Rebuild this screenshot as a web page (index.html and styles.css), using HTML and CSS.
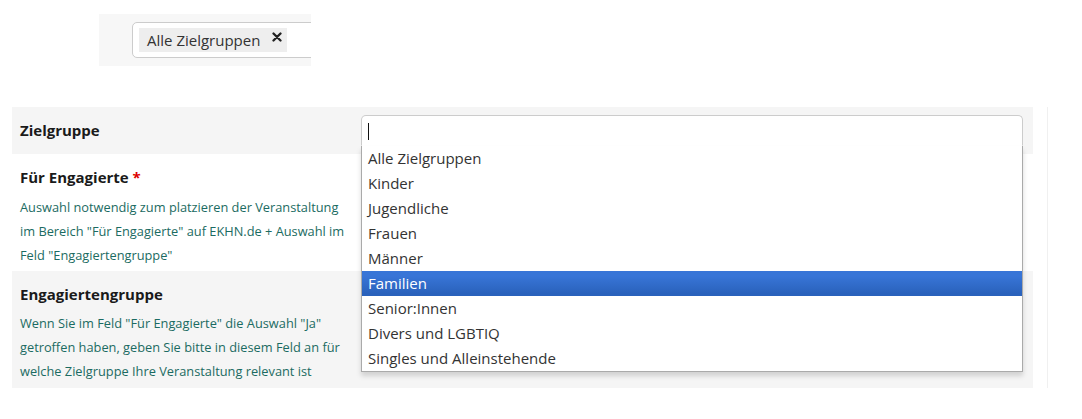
FILE: index.html
```html
<!DOCTYPE html>
<html lang="de">
<head>
<meta charset="utf-8">
<link rel="stylesheet" href="styles.css">
</head>
<body>
<div class="preview">
  <div class="chip-input">
    <span class="chip">Alle Zielgruppen<svg class="chip-x" viewBox="0 0 10 10" width="10" height="10"><path d="M1.5 1.5 L8.5 8.5 M8.5 1.5 L1.5 8.5" stroke="#222" stroke-width="2.3" stroke-linecap="round"/></svg></span>
  </div>
</div>

<div class="form-wrap">
  <div class="form">
    <div class="row grey">
      <div class="label-cell"><div class="label">Zielgruppe</div></div>
      <div class="field-cell">
        <div class="combo">
          <div class="search open"><span class="caret"></span></div>
          <ul class="drop">
            <li>Alle Zielgruppen</li>
            <li>Kinder</li>
            <li>Jugendliche</li>
            <li>Frauen</li>
            <li>Männer</li>
            <li class="hl">Familien</li>
            <li>Senior:Innen</li>
            <li>Divers und LGBTIQ</li>
            <li>Singles und Alleinstehende</li>
          </ul>
        </div>
      </div>
    </div>
    <div class="row">
      <div class="label-cell">
        <div class="label">Für Engagierte <span class="req">*</span></div>
        <div class="help">Auswahl notwendig zum platzieren der Veranstaltung im Bereich "Für Engagierte" auf EKHN.de + Auswahl im Feld "Engagiertengruppe"</div>
      </div>
      <div class="field-cell"><div class="select s2"></div></div>
    </div>
    <div class="row grey">
      <div class="label-cell">
        <div class="label">Engagiertengruppe</div>
        <div class="help">Wenn Sie im Feld "Für Engagierte" die Auswahl "Ja" getroffen haben, geben Sie bitte in diesem Feld an für welche Zielgruppe Ihre Veranstaltung relevant ist</div>
      </div>
      <div class="field-cell"><div class="select s3"></div></div>
    </div>
  </div>
</div>
</body>
</html>
```
FILE: styles.css
```css
* { box-sizing: border-box; }
body {
  margin: 0;
  background: #fff;
  font-family: "Open Sans", "Noto Sans", sans-serif;
  color: #222;
}
.preview {
  margin: 14px 0 0 99px;
  width: 212px;
  height: 52px;
  background: #f7f7f7;
  overflow: hidden;
  padding: 8px 0 0 33px;
}
.chip-input {
  width: 260px;
  height: 36px;
  background: #fff;
  border: 1px solid #ccc;
  border-radius: 5px;
  padding: 5px 0 0 6px;
}
.chip {
  display: inline-flex;
  align-items: flex-start;
  height: 24px;
  padding: 0 5px 0 8px;
  background: #eee;
  font-size: 15px;
  line-height: 24px;
  color: #333;
}
.chip-x { margin: 4px 0 0 12px; }

.form-wrap {
  margin-top: 41px;
  width: 1048px;
  border-right: 1px solid #f0f0f0;
  padding: 0 14px 0 12px;
}
.form { width: 1021px; }
.row {
  display: grid;
  grid-template-columns: 349px 1fr;
  padding-right: 10px;
}
.row.grey { background: #f5f5f5; }
.row:nth-child(1) { height: 47px; }
.row:nth-child(2), .row:nth-child(3) { height: 117px; }
.label-cell { padding: 13px 16px 0 8px; }
.label {
  font-weight: 700;
  font-size: 15px;
  line-height: 20px;
  color: #1a1a1a;
}
.req { color: #d00; }
.help {
  margin-top: 8px;
  font-size: 12.8px;
  line-height: 24px;
  color: #1b6b62;
}
.row:nth-child(3) .help { margin-top: 7px; }
.field-cell { position: relative; }
.combo { position: relative; padding-top: 8px; }
.search {
  height: 31px;
  background: #fff;
  border: 1px solid #ccc;
  border-radius: 5px;
  padding: 7px 0 0 6px;
}
.search.open { border-radius: 5px 5px 0 0; border-bottom-color: #fff; }
.caret {
  display: block;
  width: 1px;
  height: 17px;
  background: #111;
}
.drop {
  position: absolute;
  z-index: 5;
  left: 0;
  right: 0;
  top: 39px;
  margin: 0;
  padding: 0;
  list-style: none;
  background: #fff;
  border: 1px solid #aaa;
  border-top: 0;
  box-shadow: 0 4px 5px rgba(0,0,0,.15);
}
.drop li {
  height: 25px;
  padding: 0 6px;
  font-size: 15px;
  line-height: 25px;
  color: #333;
}
.drop li.hl {
  background: linear-gradient(#3875d7 20%, #2a62bc 90%);
  color: #fff;
}
.select {
  height: 32px;
  border: 1px solid #ccc;
  border-radius: 4px;
  background: #fff;
}
.s2 { margin-top: 11px; }
.s3 { margin-top: 8px; }
```
